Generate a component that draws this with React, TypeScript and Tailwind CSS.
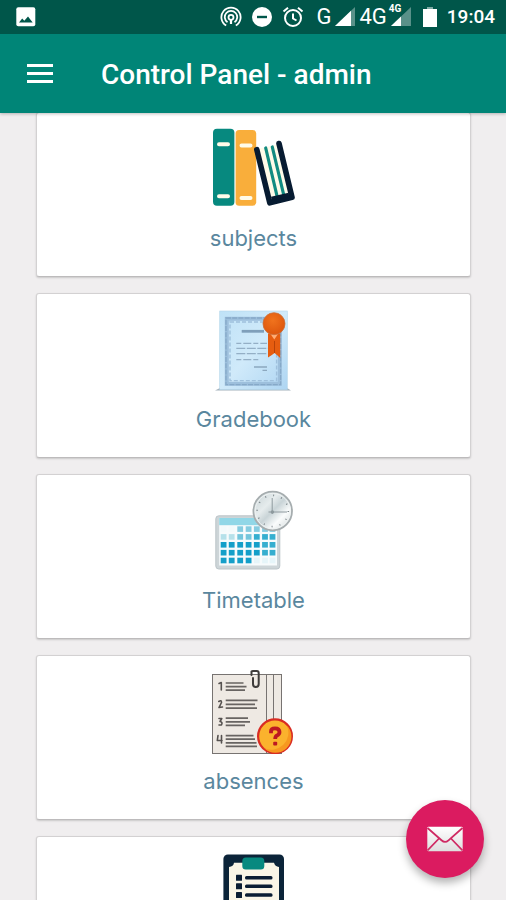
import type { ReactNode } from "react";

function BooksIcon() {
  return (
    <svg viewBox="1 0 84 84" className="size-21" aria-hidden="true">
      <rect x="2" y="1.7" width="21.4" height="77" rx="4" fill="#07897f" />
      <rect x="24.6" y="3" width="20.6" height="75.7" rx="3.5" fill="#f9ae3b" />
      <g stroke="#fffbe9" strokeWidth="4" strokeLinecap="round">
        <path d="M8 17.3h9M8 69.3h9M30.5 18.4h9M30.5 71h9" />
      </g>
      <path d="M47 22 68 17 81 71 60 76Z" fill="#fffbe9" />
      <path d="M54.7 21 66.5 71M61.3 20 73 69" stroke="#128b81" strokeWidth="3.2" strokeLinecap="round" />
      <path d="M45.8 22.6 58.8 75.8 81 70.4 68 16.5" fill="none" stroke="#071b31" strokeWidth="5.6" strokeLinecap="round" strokeLinejoin="round" />
      <path d="M60.5 71.8 78 67.6" stroke="#071b31" strokeWidth="4" />
    </svg>
  );
}

function CertificateIcon() {
  return (
    <svg viewBox="1 0 84 84" className="size-21" aria-hidden="true">
      <defs>
        <linearGradient id="paper" x1="0" y1="0" x2="1" y2="1">
          <stop offset="0" stopColor="#bfe2f7" />
          <stop offset="0.5" stopColor="#d0eafa" />
          <stop offset="1" stopColor="#aed5f2" />
        </linearGradient>
        <radialGradient id="seal" cx="0.45" cy="0.35" r="0.7">
          <stop offset="0" stopColor="#f0731d" />
          <stop offset="1" stopColor="#dc540c" />
        </radialGradient>
      </defs>
      <path d="M4 82.5 9 80H76L80 82.5Z" fill="#8798a6" opacity="0.75" />
      <rect x="8.7" y="3" width="67.6" height="78.5" fill="url(#paper)" stroke="#b5d7eb" strokeWidth="0.6" />
      <rect x="15.8" y="10.8" width="53" height="65" fill="none" stroke="#9dbfdc" strokeWidth="4" />
      <rect x="15" y="10" width="54.6" height="66.6" fill="none" stroke="#86a9c8" strokeWidth="1.3" strokeDasharray="5 1.2" />
      <rect x="19" y="14" width="46.6" height="58.6" fill="none" stroke="#9fc0dc" strokeWidth="1.4" strokeDasharray="4 2" />
      <path d="M30.7 23.3H53" stroke="#7f9fba" strokeWidth="2.8" />
      <path d="M25.3 35.3H56M25.3 51.7H48" stroke="#94afc6" strokeWidth="1.3" strokeDasharray="5 2 8 2" />
      <path d="M25.3 40.3H58M25.3 45.7H56" stroke="#94afc6" strokeWidth="1.3" strokeDasharray="9 1.5" />
      <path d="M43 59H56M51.5 62.4H56" stroke="#8ca8bf" strokeWidth="1.4" />
      <path d="M57 25.5H69.2V50L66.2 47.3 63.6 45 60.5 47.2 57 49.5Z" fill="#e65d10" />
      <path d="M59.5 26 63.3 31.5 67 26" fill="#ffad76" />
      <path d="M63.5 33V45" stroke="#b94307" strokeWidth="1" />
      <circle cx="63" cy="15.7" r="11" fill="url(#seal)" stroke="#c9713d" strokeWidth="0.8" />
    </svg>
  );
}

const calendarColumns = [12.6, 20.7, 29.2, 37.6, 45.8, 54, 61.5];
const calendarRows = [40, 47.8, 55.7, 63.6, 71.4];

function cellColor(row: number, col: number): string {
  if (row === 0) return col < 2 ? "#f3fafb" : "#86cce0";
  if (row === 1) return col < 2 ? "#b6e1ea" : col < 4 ? "#74c6dc" : "#35afd0";
  if (row === 4 && col > 3) return "#e6f5f9";
  return col > 4 ? "#36aecf" : "#149fc9";
}

function CalendarIcon() {
  return (
    <svg viewBox="1 0 84 84" className="size-21" aria-hidden="true">
      <defs>
        <linearGradient id="clock" x1="0" y1="0" x2="1" y2="1">
          <stop offset="0" stopColor="#c4d0d3" />
          <stop offset="0.35" stopColor="#e6eced" />
          <stop offset="0.5" stopColor="#c9d4d7" />
          <stop offset="0.7" stopColor="#fafcfc" />
          <stop offset="1" stopColor="#c8d0d2" />
        </linearGradient>
      </defs>
      <rect x="4.8" y="26.8" width="64" height="53.2" rx="3" fill="#cdd5d8" stroke="#bcc5c9" />
      <rect x="8.2" y="29" width="57.8" height="47.5" fill="#f7fbfc" />
      <rect x="8.2" y="29" width="57.8" height="7.2" fill="#91d7e7" />
      {calendarRows.map((y, row) =>
        calendarColumns.map((x, col) => (
          <rect key={`${x}-${y}`} x={x - 2.9} y={y - 2.7} width="5.8" height="5.6" fill={cellColor(row, col)} />
        ))
      )}
      <circle cx="61.7" cy="22" r="19.3" fill="url(#clock)" stroke="#a6adaf" strokeWidth="1.8" />
      <circle cx="61.7" cy="22" r="17.6" fill="none" stroke="#eef2f2" strokeWidth="1" />
      <circle cx="61.7" cy="22" r="15.6" fill="none" stroke="#7d878b" strokeWidth="1.6" strokeDasharray="1 7.168" />
      <path d="M61.2 9V25M57.5 23H76" stroke="#8f9a9f" strokeWidth="1" />
      <circle cx="61.4" cy="23" r="1.7" fill="#8d999d" />
    </svg>
  );
}

function PapersIcon() {
  return (
    <svg viewBox="1 0 84 84" className="size-21" aria-hidden="true">
      <g fill="#eee9e3" stroke="#777371" strokeWidth="1">
        <rect x="12" y="4.5" width="58.5" height="79" />
        <rect x="8" y="4.5" width="54.5" height="79" />
        <rect x="1.5" y="4.5" width="54" height="79" />
      </g>
      <path
        d="M14.7 13H32.5M14.7 16.7H35.5M14.7 20.2H34M14.7 30.3H46.5M14.7 34.3H44M14.7 38.2H46M14.7 48.2H37M14.7 51.8H39M14.7 55.3H34M14.7 65.7H42.5M14.7 69.2H44M14.7 72.8H45.5M14.7 76.4H46"
        stroke="#686462"
        strokeWidth="1.7"
      />
      <g fill="none" stroke="#55514f" strokeWidth="1.6" strokeLinecap="round" strokeLinejoin="round">
        <path d="M8 13.5 10.3 12.5V20" />
        <path d="M7.8 31.5Q10.5 29.5 10.5 32.5L8 37.5 11.5 37" />
        <path d="M8 48.5H10.8L9 51.5Q12 52 10.5 55H8" />
        <path d="M7 65.5 6.3 70.5H11M10.5 65.5V73" />
      </g>
      <path d="M40.5 5V1.5Q41 1 42 1H45.8Q47.7 1 47.7 3V14Q47.7 17 44.8 17 42 17 42 14V8" fill="none" stroke="#3f3c3b" strokeWidth="2" strokeLinecap="round" />
      <circle cx="64" cy="66.3" r="16.9" fill="#fbb22d" stroke="#d92c23" strokeWidth="2.2" />
      <path d="M75.8 55.5A16 16 0 0 1 53 78 17 17 0 0 0 75.8 55.5" fill="#f79820" />
      <path d="M60 63.3V61.5Q60 58.3 64 58.3 68.5 58.3 68.5 62 68.5 64.3 66 65.5 64.2 66.3 64.2 69" fill="none" stroke="#bd1822" strokeWidth="3.8" />
      <rect x="62.2" y="71.8" width="4" height="3.8" rx="1" fill="#bd1822" />
    </svg>
  );
}

function ClipboardIcon() {
  return (
    <svg viewBox="1 0 84 84" className="size-21" aria-hidden="true">
      <rect x="12.4" y="3.4" width="60.6" height="78" rx="4.5" fill="#0b2439" />
      <path d="M23 11.7H63Q64 15.5 68 16V76H18V16Q22.5 15.5 23 11.7Z" fill="#faf5e6" />
      <rect x="31.3" y="6.5" width="22" height="12" rx="3.5" fill="#07897f" />
      {[26.7, 35.3, 44, 52.7, 61.4].map((y) => (
        <g key={y} fill="#0b1d33">
          <rect x="25" y={y - 3} width="6" height="6" rx="0.5" />
          <rect x="34" y={y - 1.8} width="27.5" height="3.6" rx="1.5" />
        </g>
      ))}
    </svg>
  );
}

const items: { id: string; label?: string; icon: ReactNode }[] = [
  { id: "subjects", label: "subjects", icon: <BooksIcon /> },
  { id: "gradebook", label: "Gradebook", icon: <CertificateIcon /> },
  { id: "timetable", label: "Timetable", icon: <CalendarIcon /> },
  { id: "absences", label: "absences", icon: <PapersIcon /> },
  { id: "clipboard", icon: <ClipboardIcon /> },
];

// level: how much of the triangle is filled, from 0 to 20
function Signal({ level }: { level: number }) {
  return (
    <svg viewBox="0 0 20 20" className="size-5" aria-hidden="true">
      <path d="M0 19 20 0V19Z" fill="#fff" opacity="0.35" />
      <path d={`M0 19 ${level} ${19 - level * 0.95}V19Z`} fill="#fff" />
    </svg>
  );
}

function StatusBar() {
  return (
    <div className="flex h-[34px] shrink-0 items-center justify-between bg-[#00564a] pr-[11px] pl-4 text-white">
      <svg viewBox="0 0 20 20" className="size-5" aria-hidden="true">
        <rect x="0.3" y="0.3" width="19" height="19" rx="2" fill="#fff" />
        <path d="M3 15.6 6.2 11.5 8.3 13.7 12 9.5 16.7 15.6Z" fill="#00564a" />
      </svg>
      <div className="flex items-center">
        <svg viewBox="0 0 22 22" className="mr-2.5 size-[22px]" fill="none" stroke="#fff" strokeWidth="1.8" aria-hidden="true">
          <path d="M6.2 19.5A9.6 9.6 0 1 1 15.8 19.5M7.5 16.2A6.2 6.2 0 1 1 14.5 16.2" />
          <circle cx="11" cy="11.3" r="2.5" />
          <path d="M11 13V18" strokeWidth="2.2" />
        </svg>
        <svg viewBox="0 0 20 20" className="mr-2.5 size-5" aria-hidden="true">
          <circle cx="10" cy="10" r="10" fill="#fff" />
          <path d="M5 10H15" stroke="#00564a" strokeWidth="2.4" />
        </svg>
        <svg viewBox="0 0 22 22" className="mr-3 size-[22px]" fill="none" stroke="#fff" strokeWidth="2" aria-hidden="true">
          <circle cx="11" cy="12" r="8" />
          <path d="M1.5 5.5 6 1.8M20.5 5.5 16 1.8M11 7.5V12.5L14.5 14.5" />
        </svg>
        <span className="mr-1 text-[22px] leading-6">G</span>
        <Signal level={16} />
        <span className="mr-1 ml-1 text-[22px] leading-6">4G</span>
        <div className="relative">
          <Signal level={10} />
          <span className="absolute -top-1 -left-0.5 text-[10px] leading-3 font-bold">4G</span>
        </div>
        <svg viewBox="0 0 14 20" className="ml-3 h-5 w-3.5" aria-hidden="true">
          <path d="M4 0H10V2H4Z" fill="#fff" opacity="0.5" />
          <path d="M0 2H14V20H0Z" fill="#fff" />
        </svg>
        <span className="ml-2.5 text-[19px] leading-6 font-medium">19:04</span>
      </div>
    </div>
  );
}

function MenuCard({ label, icon }: { label?: string; icon: ReactNode }) {
  return (
    <a
      href="#"
      className="flex shrink-0 flex-col items-center rounded-[3px] border border-[#d3d1d2] border-b-[#bdbbbc] bg-white pt-3.5 pb-[22px] shadow-[0_1px_2px_rgba(0,0,0,0.16)]"
    >
      {icon}
      {label && <span className="mt-3 font-[Inter,sans-serif] text-[22px] leading-[31px] text-[#5a879e]">{label}</span>}
    </a>
  );
}

export default function App() {
  return (
    <div className="flex h-screen flex-col overflow-hidden bg-[#f0eeef] font-[Roboto,sans-serif]">
      <header className="z-10 shrink-0 shadow-[0_1px_3px_rgba(0,0,0,0.25)]">
        <StatusBar />
        <div className="flex h-[79px] items-center bg-[#008577] pl-[27px] text-white">
          <button type="button" aria-label="Menu" className="flex w-[26px] flex-col gap-[5px]">
            <span className="h-[3px] w-full bg-white" />
            <span className="h-[3px] w-full bg-white" />
            <span className="h-[3px] w-full bg-white" />
          </button>
          <h1 className="ml-12 pt-0.5 text-[28px] leading-9 font-medium">Control Panel - admin</h1>
        </div>
      </header>

      {/* The list slides under the app bar */}
      <main className="-mt-px flex flex-1 flex-col gap-4 overflow-y-auto pr-[35px] pb-9 pl-9 [scrollbar-width:none]">
        {items.map((item) => (
          <MenuCard key={item.id} label={item.label} icon={item.icon} />
        ))}
      </main>

      <button
        type="button"
        aria-label="Messages"
        className="fixed right-[22px] bottom-[22px] z-20 flex size-[78px] items-center justify-center rounded-full bg-[#db1b60] shadow-[0_5px_9px_rgba(0,0,0,0.3)]"
      >
        <svg viewBox="0 0 36 26" className="h-[26px] w-9" aria-hidden="true">
          <defs>
            <linearGradient id="envelope" x1="0" y1="0" x2="0" y2="1">
              <stop offset="0" stopColor="#fff" />
              <stop offset="1" stopColor="#dedede" />
            </linearGradient>
          </defs>
          <rect x="0.3" y="0.7" width="35.4" height="24.6" rx="1" fill="url(#envelope)" />
          <path d="M0.5 2 14.5 14.3Q18 17.5 21.5 14.3L35.5 2M0.5 24.5 12 12.5M35.5 24.5 24 12.5" fill="none" stroke="#cf2a63" strokeWidth="1.8" />
        </svg>
      </button>
    </div>
  );
}
